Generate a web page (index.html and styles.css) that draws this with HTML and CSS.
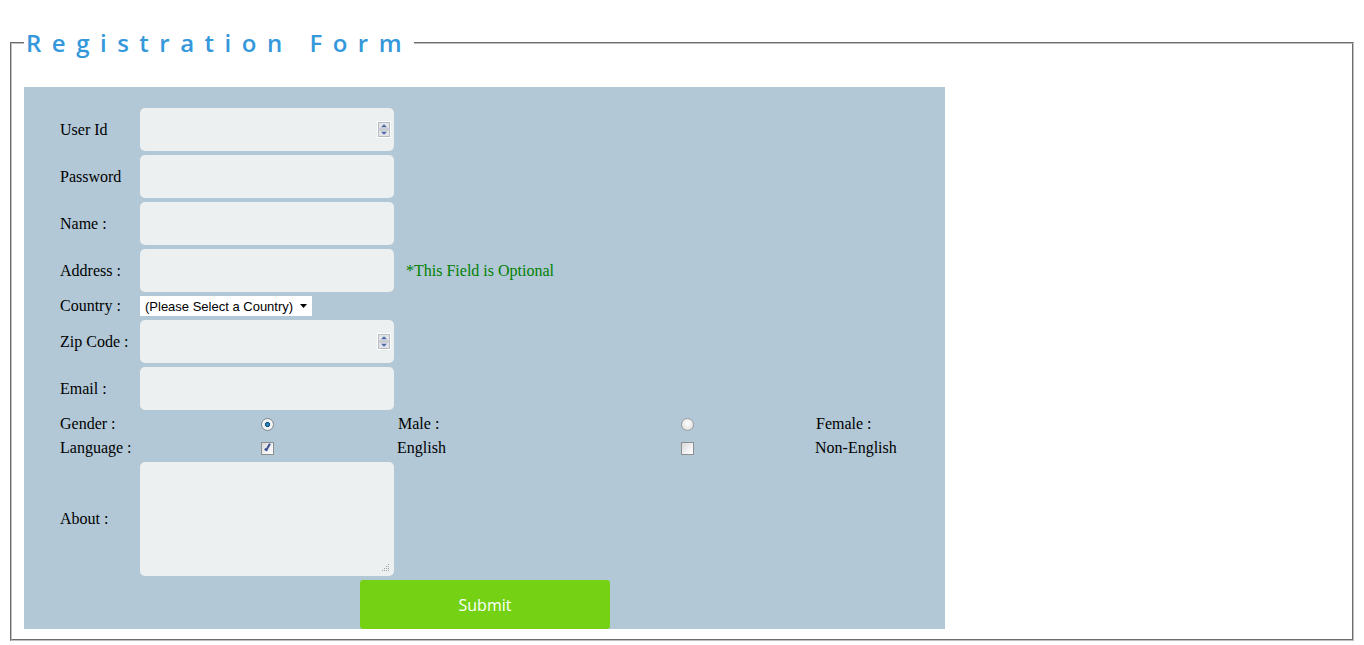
FILE: index.html
```html
<!DOCTYPE html>
<html>
<head>
<meta charset="utf-8">
<title>Registration Form</title>
<link rel="stylesheet" href="styles.css">
</head>
<body>
<form class="reg">
  <fieldset class="frame">
    <legend class="title">Registration Form</legend>
    <div class="panel">
      <label class="lbl">User Id</label>
      <div class="field">
        <input class="box" type="text">
        <svg class="spin" width="14" height="17" viewBox="0 0 14 17">
          <rect x="0.5" y="0.5" width="13" height="16" fill="#f4f4f4" stroke="#ffffff"/>
          <rect x="1.5" y="1.5" width="11" height="6.5" fill="#e2e4e8" stroke="#b8bcc4"/>
          <rect x="1.5" y="9" width="11" height="6.5" fill="#e2e4e8" stroke="#b8bcc4"/>
          <path d="M4 6.2 L7 3.2 L10 6.2 Z" fill="#4e6aa8"/>
          <path d="M4 10.8 L7 13.8 L10 10.8 Z" fill="#4e6aa8"/>
        </svg>
      </div>
      <div class="rest"></div>

      <label class="lbl">Password</label>
      <div class="field"><input class="box" type="password"></div>
      <div class="rest"></div>

      <label class="lbl">Name :</label>
      <div class="field"><input class="box" type="text"></div>
      <div class="rest"></div>

      <label class="lbl">Address :</label>
      <div class="field"><input class="box" type="text"></div>
      <div class="rest"><span class="opt">*This Field is Optional</span></div>

      <label class="lbl">Country :</label>
      <div class="field">
        <div class="select">
          <span>(Please Select a Country)</span>
          <svg class="arrow" width="7" height="4" viewBox="0 0 7 4"><path d="M0 0 H7 L3.5 4 Z" fill="#000"/></svg>
        </div>
      </div>
      <div class="rest"></div>

      <label class="lbl">Zip Code :</label>
      <div class="field">
        <input class="box" type="text">
        <svg class="spin" width="14" height="17" viewBox="0 0 14 17">
          <rect x="0.5" y="0.5" width="13" height="16" fill="#f4f4f4" stroke="#ffffff"/>
          <rect x="1.5" y="1.5" width="11" height="6.5" fill="#e2e4e8" stroke="#b8bcc4"/>
          <rect x="1.5" y="9" width="11" height="6.5" fill="#e2e4e8" stroke="#b8bcc4"/>
          <path d="M4 6.2 L7 3.2 L10 6.2 Z" fill="#4e6aa8"/>
          <path d="M4 10.8 L7 13.8 L10 10.8 Z" fill="#4e6aa8"/>
        </svg>
      </div>
      <div class="rest"></div>

      <label class="lbl">Email :</label>
      <div class="field"><input class="box" type="text"></div>
      <div class="rest"></div>

      <div class="choice-row">
        <span class="lbl">Gender :</span>
        <span class="ctrl"><input class="radio" type="radio" name="g" checked></span>
        <span class="opt-txt">Male :</span>
        <span class="ctrl"><input class="radio" type="radio" name="g"></span>
        <span class="opt-txt2">Female :</span>
      </div>

      <div class="choice-row">
        <span class="lbl">Language :</span>
        <span class="ctrl"><input class="check" type="checkbox" checked></span>
        <span class="opt-txt en">English</span>
        <span class="ctrl"><input class="check" type="checkbox"></span>
        <span class="opt-txt2 en">Non-English</span>
      </div>

      <label class="lbl">About :</label>
      <div class="field">
        <textarea class="area"></textarea>
        <svg class="grip" width="8" height="8" viewBox="0 0 8 8">
          <rect x="6" y="0" width="1" height="1" fill="#9aa0a4"/>
          <rect x="4" y="2" width="1" height="1" fill="#9aa0a4"/>
          <rect x="6" y="2" width="1" height="1" fill="#9aa0a4"/>
          <rect x="2" y="4" width="1" height="1" fill="#9aa0a4"/>
          <rect x="4" y="4" width="1" height="1" fill="#9aa0a4"/>
          <rect x="6" y="4" width="1" height="1" fill="#9aa0a4"/>
          <rect x="0" y="6" width="1" height="1" fill="#9aa0a4"/>
          <rect x="2" y="6" width="1" height="1" fill="#9aa0a4"/>
          <rect x="4" y="6" width="1" height="1" fill="#9aa0a4"/>
          <rect x="6" y="6" width="1" height="1" fill="#9aa0a4"/>
        </svg>
      </div>
      <div class="rest"></div>

      <div class="submit-row">
        <button class="submit" type="button">Submit</button>
      </div>
    </div>
  </fieldset>
</form>
</body>
</html>
```

FILE: styles.css
```css
html, body {
  background: #ffffff;
}
body {
  margin: 8px;
  font-family: "Liberation Serif", "Times New Roman", serif;
  font-size: 16px;
  color: #000;
}
.reg {
  margin: 0;
  padding-top: 19px;
}
.frame {
  margin: 0 2px;
  border: 2px groove #c0c0c0;
  padding: 6px 12px 10px 12px;
}
.title {
  padding: 0 2px;
  font-family: "Open Sans", "DejaVu Sans", sans-serif;
  font-weight: 600;
  font-size: 24px;
  letter-spacing: 10.5px;
  color: #3498db;
  line-height: 32px;
}
.panel {
  margin-top: 22px;
  width: 921px;
  box-sizing: border-box;
  background: #b2c8d7;
  padding: 21px 0 0 36px;
  display: grid;
  grid-template-columns: 80px 254px 1fr;
  row-gap: 4px;
  align-items: center;
}
.lbl {
  font-size: 16px;
}
.field {
  position: relative;
  height: 100%;
  display: flex;
  align-items: center;
}
.box {
  display: block;
  width: 254px;
  height: 43px;
  box-sizing: border-box;
  border: none;
  border-radius: 5px;
  background: #ecf0f1;
  margin: 0;
  padding: 0 8px;
  outline: none;
}
.spin {
  position: absolute;
  right: 3px;
  top: 13px;
}
.rest {
  display: flex;
  align-items: center;
}
.opt {
  margin-left: 12px;
  color: #008000;
  font-size: 16px;
}
.select {
  width: 172px;
  height: 20px;
  box-sizing: border-box;
  background: #fff;
  display: flex;
  align-items: center;
  justify-content: space-between;
  padding: 0 5px 0 5px;
  font-family: "Liberation Sans", Arial, sans-serif;
  font-size: 13px;
  color: #000;
}
.arrow {
  display: block;
}
.choice-row {
  grid-column: 1 / -1;
  display: grid;
  grid-template-columns: 80px 254px 164px 258px auto;
  align-items: center;
  height: 20px;
}
.ctrl {
  display: flex;
  justify-content: center;
  align-items: center;
}
.opt-txt {
  padding-left: 4px;
}
.opt-txt.en {
  padding-left: 3px;
}
.opt-txt2.en {
  margin-left: -1px;
}
.radio {
  appearance: none;
  -webkit-appearance: none;
  margin: 0;
  width: 13px;
  height: 13px;
  border-radius: 50%;
  border: 1px solid #9c9c9c;
  background: radial-gradient(circle at 50% 40%, #ffffff 0%, #e8e8e8 60%, #d2d2d2 100%);
  box-sizing: border-box;
  position: relative;
}
.radio:checked {
  background: radial-gradient(circle at 50% 50%, #2f98dc 0%, #17557f 30%, #e4eaee 36%, #f6f6f6 60%, #d2d2d2 100%);
  border-color: #7f8b94;
}
.check {
  appearance: none;
  -webkit-appearance: none;
  margin: 0;
  width: 13px;
  height: 13px;
  border: 1px solid #8e8f8f;
  background: linear-gradient(135deg, #d8d8d8 0%, #f2f2f2 60%, #ffffff 100%);
  box-sizing: border-box;
  position: relative;
}
.check:checked::after {
  content: "";
  position: absolute;
  left: 4px;
  top: 0px;
  width: 3px;
  height: 8px;
  border-right: 2px solid #3a4f94;
  border-bottom: 2px solid #3a4f94;
  transform: rotate(30deg);
  box-sizing: border-box;
}
.area {
  display: block;
  width: 254px;
  height: 114px;
  box-sizing: border-box;
  border: none;
  border-radius: 5px;
  background: #ecf0f1;
  margin: 0;
  resize: none;
  outline: none;
}
.grip {
  position: absolute;
  right: 4px;
  bottom: 4px;
}
.submit-row {
  grid-column: 2 / -1;
}
.submit {
  margin-left: 220px;
  width: 250px;
  height: 49px;
  border: none;
  border-radius: 3px;
  background: #74d114;
  color: #ffffff;
  font-family: "Open Sans", "Liberation Sans", sans-serif;
  font-size: 16px;
  display: block;
}
```
